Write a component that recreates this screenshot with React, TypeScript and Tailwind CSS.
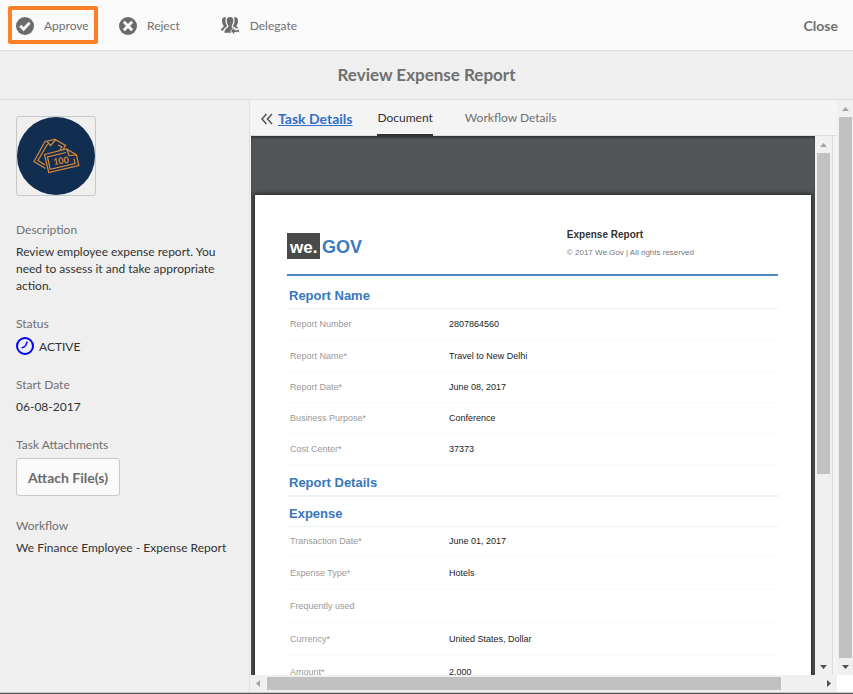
import React from "react";

type Field = { label: string; value: string };

const reportFields: Field[] = [
  { label: "Report Number", value: "2807864560" },
  { label: "Report Name*", value: "Travel to New Delhi" },
  { label: "Report Date*", value: "June 08, 2017" },
  { label: "Business Purpose*", value: "Conference" },
  { label: "Cost Center*", value: "37373" },
];

const expenseFields: Field[] = [
  { label: "Transaction Date*", value: "June 01, 2017" },
  { label: "Expense Type*", value: "Hotels" },
  { label: "Frequently used", value: "" },
  { label: "Currency*", value: "United States, Dollar" },
  { label: "Amount*", value: "2,000" },
];

function ApproveIcon() {
  return (
    <svg className="size-[18px] shrink-0" viewBox="0 0 18 18" aria-hidden="true">
      <circle cx="9" cy="9" r="9" fill="#6b6b6b" />
      <path d="M4.2 8.8l3.4 3.500 6-6.600" fill="none" stroke="#fafafa" strokeWidth="2.800" />
    </svg>
  );
}

function RejectIcon() {
  return (
    <svg className="size-[18px] shrink-0" viewBox="0 0 18 18" aria-hidden="true">
      <circle cx="9" cy="9" r="9" fill="#6b6b6b" />
      <path d="M4.800 4.800l8.400 8.400M13.200 4.800l-8.400 8.400" fill="none" stroke="#fafafa" strokeWidth="2.900" />
    </svg>
  );
}

function DelegateIcon() {
  return (
    <svg className="h-[18px] w-[19px] shrink-0" viewBox="0 0 19 18" aria-hidden="true" fill="#6b6b6b">
      <path d="M1.6 1.2C2.6.2 4.2.1 5 .8 4.4 2 4.3 3.8 4.6 5.4c.3 1.6 1.300 2.500 1.300 3.600 0 1.500-3.200 1.700-3.600 4.600H0c0-2.800 2.500-2.900 2.600-4.300C2.700 8 1.300 7.200 1.100 4.900 1 3.400 1 2 1.600 1.200z" />
      <path d="M16.400 1.200C15.400.2 13.800.1 13 .8c.6 1.200.7 3 .4 4.600-.3 1.600-1.300 2.500-1.300 3.600 0 1 1.900 1.500 3 2.200h2.700c-.4-.9-2.300-1-2.400-2 0-1.200 1.400-2 1.500-4.300.1-1.500.1-2.900-.5-3.700z" />
      <path d="M9 0c2.300 0 3.400 1.500 3.300 3.800-.1 3.200-1.700 4-1.700 5.700 0 .8.600 1.200 1.400 1.700l-2.200 4.600H3.400c0-5.100 4-4.500 4-6.600C7.400 7.800 5.800 7 5.700 3.800 5.600 1.500 6.700 0 9 0z" />
      <path d="M9.600 14l4-4v2.700H18.500v2.600h-4.900v2.700z" stroke="#fafafa" strokeWidth=".8" />
    </svg>
  );
}

function ClockIcon() {
  return (
    <svg className="size-[18px] shrink-0" viewBox="0 0 18 18" fill="none" stroke="#0000fb" aria-hidden="true">
      <circle cx="9" cy="9" r="8" strokeWidth="2" />
      <path d="M11.200 4.600L9.800 8.200Q9 10 5.600 11" strokeWidth="1.500" />
    </svg>
  );
}

function BanknotesIcon() {
  return (
    <svg className="block size-[78px]" viewBox="0 0 78 78" role="img" aria-label="Expense">
      <circle cx="39" cy="39" r="39" fill="#112e51" />
      <g fill="none" stroke="#dc8a3c" strokeWidth="1.200">
        <path d="M28.500 51.500L17 44.500 28 24.500l10-2 10.500 6-2.500 4" />
        <path d="M28 48l-7-4.500L30.500 27M30 24.500l3.500 4 5-5.500" />
        <path d="M41 28l4 2-2 3" />
        <path d="M27.500 37.500l22-5.500 10 6 2.200 10.500-30 7z" />
        <path d="M49 35.500l-18.500 4.500 2.700 12.300 24.800-5.800-1-5" />
        <path d="M50 32.500l2 6 7-.5" />
      </g>
      <text x="36" y="47" fill="#dc8a3c" fontFamily="Lato, sans-serif" fontSize="9" fontWeight="700" transform="rotate(-8 44 43)">100</text>
    </svg>
  );
}

function Arrow({ dir, dim }: { dir: "up" | "down" | "left" | "right"; dim?: boolean }) {
  const d = {
    up: "M5 11l3.500-4 3.500 4z",
    down: "M5 7l3.500 4L12 7z",
    left: "M10 5L6 8.500l4 3.500z",
    right: "M7 5l4 3.500L7 12z",
  }[dir];
  return (
    <svg className="block size-[17px] shrink-0" viewBox="0 0 17 17" fill={dim ? "#a3a3a3" : "#505050"} aria-hidden="true">
      <path d={d} />
    </svg>
  );
}

function VerticalBar({ thumb }: { thumb: string }) {
  return (
    <div className="flex w-[17px] shrink-0 flex-col bg-[#f0f0f0]" aria-hidden="true">
      <Arrow dir="up" dim />
      <div className="min-h-0 grow px-[2px]">
        <div className={`bg-[#c1c1c1] ${thumb}`} />
      </div>
      <Arrow dir="down" />
    </div>
  );
}

function Detail({ label, children }: { label: string; children: React.ReactNode }) {
  return (
    <div>
      <dt className="leading-[17px] text-[#707070]">{label}</dt>
      <dd className="mt-[5px] leading-[17px] text-[#323232]">{children}</dd>
    </div>
  );
}

function SectionTitle({ children, line }: { children: React.ReactNode; line: string }) {
  return (
    <h2 className={`flex items-center border-[#eaf2f3] px-[2px] text-[13px] font-bold leading-4 text-[#3577bb] ${line}`}>
      {children}
    </h2>
  );
}

function FieldTable({ fields, row }: { fields: Field[]; row: string }) {
  return (
    <table className="w-full table-fixed border-collapse text-left">
      <tbody>
        {fields.map((f) => (
          <tr key={f.label} className={`border-b border-[#fafafa] ${row}`}>
            <th scope="row" className="w-[33%] py-0 pl-[3px] font-normal text-[#999]">{f.label}</th>
            <td className="py-0 text-[#222]">{f.value}</td>
          </tr>
        ))}
      </tbody>
    </table>
  );
}

function GovLogo() {
  return (
    <svg className="block h-[34px] w-[77px]" viewBox="0 0 77 34" role="img" aria-label="we.GOV">
      <rect y="6" width="33" height="26" fill="#4a4a4a" />
      <g fontFamily="'Liberation Sans', Arial, sans-serif" fontWeight="700">
        <text x="3" y="26" fill="#fff" fontSize="17">we.</text>
        <text x="35" y="26" fill="#3b7bbf" fontSize="18">GOV</text>
      </g>
    </svg>
  );
}

function Document() {
  return (
    <article className="mx-1 mt-[59px] bg-white pl-8 pr-[33px] pt-8 font-['Liberation_Sans',Arial,sans-serif] text-[9px] leading-3 shadow-[0_0_4px_1px_#222]">
      <header className="flex h-[49px] border-b-2 border-[#4f86c6]">
        <div className="w-[57%]">
          <GovLogo />
        </div>
        <div>
          <h1 className="text-[10px] font-bold leading-4 text-[#333]">Expense Report</h1>
          <p className="mt-1 text-[8px] leading-3 text-[#777]">© 2017 We.Gov | All rights reserved</p>
        </div>
      </header>
      <SectionTitle line="h-[33px] border-b pt-2">Report Name</SectionTitle>
      <FieldTable fields={reportFields} row="h-[31px]" />
      <SectionTitle line="h-8 border-b-2 pt-1.5">Report Details</SectionTitle>
      <SectionTitle line="h-[30px] border-b pt-1.5">Expense</SectionTitle>
      <FieldTable fields={expenseFields} row="h-[33px] first:h-[30px]" />
    </article>
  );
}

export default function App() {
  return (
    <div className="flex h-screen flex-col overflow-hidden border-b border-[#555] bg-[#efefef] font-[Lato,'Noto_Sans',sans-serif] text-[12px] text-[#707070]">
      <header className="flex h-[51px] shrink-0 items-center border-b border-[#dcdcdc] bg-[#fafafa] pl-2 pr-[15px]">
        <button className="flex h-[38px] w-[90px] items-center gap-[10px] rounded-[2px] border-4 border-[#ff7f27] pl-1 pt-0.5">
          <ApproveIcon />
          Approve
        </button>
        <button className="ml-[21px] flex items-center gap-[10px] pt-0.5">
          <RejectIcon />
          Reject
        </button>
        <button className="ml-[41px] flex items-center gap-[10px] pt-0.5">
          <DelegateIcon />
          Delegate
        </button>
        <button className="ml-auto text-[14px] font-bold">Close</button>
      </header>
      <div className="flex h-[49px] shrink-0 items-center justify-center border-b border-[#dcdcdc]">
        <h1 className="text-[17px] font-bold">Review Expense Report</h1>
      </div>
      <div className="flex min-h-0 grow border-b border-[#c8c8c8]">
        <aside className="w-[250px] shrink-0 border-r border-[#e2e2e2] px-4 pt-4">
          <div className="w-fit rounded-[3px] border border-[#c8c8c8]">
            <BanknotesIcon />
          </div>
          <dl className="mt-[25px] flex flex-col gap-[21px]">
            <Detail label="Description">Review employee expense report. You need to assess it and take appropriate action.</Detail>
            <Detail label="Status">
              <span className="flex items-center gap-[5px]"><ClockIcon />ACTIVE</span>
            </Detail>
            <Detail label="Start Date">06-08-2017</Detail>
            <Detail label="Task Attachments">
              <button className="h-[38px] rounded-[3px] border border-[#c8c8c8] bg-[#fafafa] px-[11px] text-[14px] font-bold text-[#6b6b6b]">Attach File(s)</button>
            </Detail>
            <Detail label="Workflow">We Finance Employee - Expense Report</Detail>
          </dl>
        </aside>
        <main className="flex min-w-0 grow flex-col bg-[#f4f4f4]">
          <nav className="flex h-9 shrink-0 items-stretch border-b border-[#dcdcdc] pl-[11px]">
            <a href="#task" className="flex items-center gap-[5px] pt-0.5 text-[14px] font-bold text-[#326ec8]">
              <svg className="h-3 w-3" viewBox="0 0 12 12" fill="none" stroke="#5a5550" strokeWidth="1.600" aria-hidden="true">
                <path d="M5.500 1L1 6l4.500 5M11 1L6.500 6l4.500 5" />
              </svg>
              <span className="underline">Task Details</span>
            </a>
            <a href="#document" className="-mb-px ml-[25px] flex items-center border-b-2 border-[#323232] pt-0.5 text-[#323232]">Document</a>
            <a href="#workflow" className="ml-8 flex items-center">Workflow Details</a>
          </nav>
          <div className="mr-1 flex min-h-0 grow border-r border-[#dcdcdc] pl-px">
            <div className="min-w-0 grow overflow-hidden bg-[#525659] shadow-[inset_0_2px_2px_#33373a]">
              <Document />
            </div>
            <VerticalBar thumb="h-[63.6%]" />
          </div>
          <div className="flex h-[17px] shrink-0 bg-[#f0f0f0]" aria-hidden="true">
            <Arrow dir="left" dim />
            <div className="grow py-[2px]">
              <div className="h-full w-[93%] bg-[#c1c1c1]" />
            </div>
            <Arrow dir="right" />
          </div>
        </main>
        <div className="flex w-4 shrink-0 overflow-hidden bg-white pb-[17px]">
          <VerticalBar thumb="h-full" />
        </div>
      </div>
    </div>
  );
}
